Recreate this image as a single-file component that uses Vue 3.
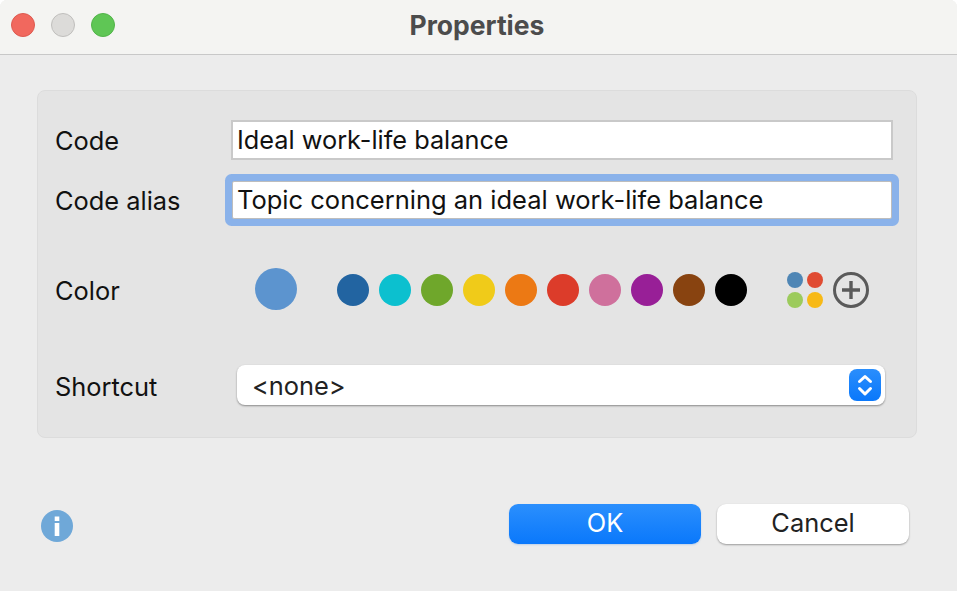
<script setup>
const swatches = ['#2264a1', '#0cc0cf', '#6fa72b', '#f0cb19', '#ec7914', '#dc3c2a', '#cf709c', '#981f97', '#884310', '#000000']
const palette = ['#4f86b5', '#e04b32', '#9ccb5c', '#f7b916']
</script>

<template>
  <div class="window">
    <header class="titlebar">
      <div class="lights">
        <span class="light red"></span>
        <span class="light gray"></span>
        <span class="light green"></span>
      </div>
      <div class="title">Properties</div>
    </header>

    <section class="panel">
      <div class="row">
        <label class="label">Code</label>
        <input class="field" value="Ideal work-life balance" readonly />
      </div>
      <div class="row row-alias">
        <label class="label">Code alias</label>
        <input class="field focused" value="Topic concerning an ideal work-life balance" readonly />
      </div>
      <div class="row row-color">
        <label class="label">Color</label>
        <span class="current"></span>
        <div class="swatches">
          <span v-for="c in swatches" :key="c" class="swatch" :style="{ background: c }"></span>
        </div>
        <div class="palette">
          <span v-for="c in palette" :key="c" :style="{ background: c }"></span>
        </div>
        <svg class="plus" width="36" height="36" viewBox="0 0 36 36" fill="none" stroke="#5a5a5a">
          <circle cx="18" cy="18" r="16.5" stroke-width="3" />
          <path d="M18 9v18M9 18h18" stroke-width="3.4" />
        </svg>
      </div>
      <div class="row row-shortcut">
        <label class="label">Shortcut</label>
        <div class="select">
          <span class="select-text">&lt;none&gt;</span>
          <span class="stepper">
            <svg width="32" height="32" viewBox="0 0 32 32" fill="none" stroke="#fff" stroke-width="3" stroke-linecap="round" stroke-linejoin="round">
              <path d="M10.500 12.500 16 7.500l5.500 5" />
              <path d="M10.500 19.500 16 25l5.500-5.500" />
            </svg>
          </span>
        </div>
      </div>
    </section>

    <footer class="footer">
      <svg class="info" width="32" height="32" viewBox="0 0 32 32">
        <circle cx="16" cy="16" r="16" fill="#6fa8d8" />
        <rect x="13.700" y="6.500" width="4.600" height="4.500" fill="#fff" />
        <rect x="13.700" y="13" width="4.600" height="13" fill="#fff" />
      </svg>
      <div class="buttons">
        <button class="btn primary">OK</button>
        <button class="btn">Cancel</button>
      </div>
    </footer>
  </div>
</template>

<style scoped>
.window {
  width: 957px;
  height: 591px;
  background: #ececec;
  font-family: Inter, "Liberation Sans", sans-serif;
  color: #111;
  overflow: hidden;
  border-top-left-radius: 7px;
  border-top-right-radius: 7px;
}

.titlebar {
  height: 55px;
  box-sizing: border-box;
  display: grid;
  grid-template-columns: 1fr auto 1fr;
  align-items: center;
  background: #f4f4f2;
  border-bottom: 1px solid #c8c8c8;
  padding-bottom: 4px;
}

.lights {
  display: flex;
  gap: 16px;
  padding-left: 11px;
}

.light {
  width: 24px;
  height: 24px;
  border-radius: 50%;
  box-sizing: border-box;
  border: 1px solid;
}

.red { background: #f1685e; border-color: #dd5a50; }
.gray { background: #dcdbd9; border-color: #c0bfbd; }
.green { background: #5fc655; border-color: #52b44a; }

.title {
  font-size: 26.5px;
  font-weight: 700;
  color: #4c4c4c;
  margin-left: -3px;
}

.panel {
  width: 880px;
  height: 348px;
  box-sizing: border-box;
  margin: 35px 0 0 37px;
  padding: 29px 18px 0 17px;
  background: #e4e4e4;
  border: 1px solid #dcdcdc;
  border-radius: 8px;
}

.row {
  display: flex;
  align-items: center;
  height: 40px;
}

.row-alias { margin-top: 20px; }
.row-color { margin-top: 48px; height: 42px; }
.row-shortcut { margin-top: 55px; }

.label {
  flex: none;
  width: 176px;
  font-size: 25.4px;
}

.row-color .label,
.row-shortcut .label {
  padding-top: 2px;
}

.field {
  width: 662px;
  height: 40px;
  box-sizing: border-box;
  padding: 0 4px 2px;
  border: 2px solid #c9c9c9;
  background: #fff;
  font: inherit;
  font-size: 25.3px;
  color: #111;
  outline: none;
  border-radius: 0;
}

.field.focused {
  width: 660px;
  height: 38px;
  margin-left: 1px;
  padding: 0 4px 2px;
  border: 1px solid #bdbdbd;
  box-shadow: 0 0 0 7px #8ab2ea;
  border-radius: 2px;
  font-size: 25.5px;
}

.current {
  flex: none;
  width: 42px;
  height: 42px;
  margin-left: 24px;
  border-radius: 50%;
  background: #5c94cf;
}

.swatches {
  display: flex;
  gap: 10px;
  margin: 2px 0 0 40px;
}

.swatch {
  width: 32px;
  height: 32px;
  border-radius: 50%;
}

.palette {
  display: grid;
  grid-template-columns: 16px 16px;
  gap: 4px;
  margin: 2px 0 0 40px;
}

.palette span {
  height: 16px;
  border-radius: 50%;
}

.plus {
  margin: 2px 0 0 10px;
}

.select {
  flex: none;
  width: 648px;
  height: 40px;
  margin-left: 6px;
  box-sizing: border-box;
  padding: 0 4px 0 15px;
  display: flex;
  align-items: center;
  justify-content: space-between;
  background: #fff;
  border-radius: 8px;
  box-shadow: 0 1px 2px rgba(0, 0, 0, 0.4);
  font-size: 25.4px;
  color: #222;
}

.stepper {
  width: 32px;
  height: 32px;
  border-radius: 8px;
  background: linear-gradient(#2a8efc, #0a78fb);
}

.stepper svg {
  display: block;
}

.footer {
  display: flex;
  align-items: flex-start;
  justify-content: space-between;
  margin-top: 66px;
  padding: 0 48px 0 41px;
}

.info {
  margin-top: 6px;
}

.buttons {
  display: flex;
  gap: 16px;
}

.btn {
  width: 192px;
  height: 40px;
  border: 0;
  border-radius: 9px;
  background: #fff;
  box-shadow: 0 1px 2px rgba(0, 0, 0, 0.35);
  font: inherit;
  font-size: 25.4px;
  color: #222;
  padding: 0 0 4px;
}

.btn.primary {
  background: linear-gradient(#2b8ffd, #0a78fb);
  color: #fff;
  box-shadow: 0 1px 2px rgba(0, 100, 220, 0.2);
}
</style>

<style>
html, body { background: #fff; }
</style>
